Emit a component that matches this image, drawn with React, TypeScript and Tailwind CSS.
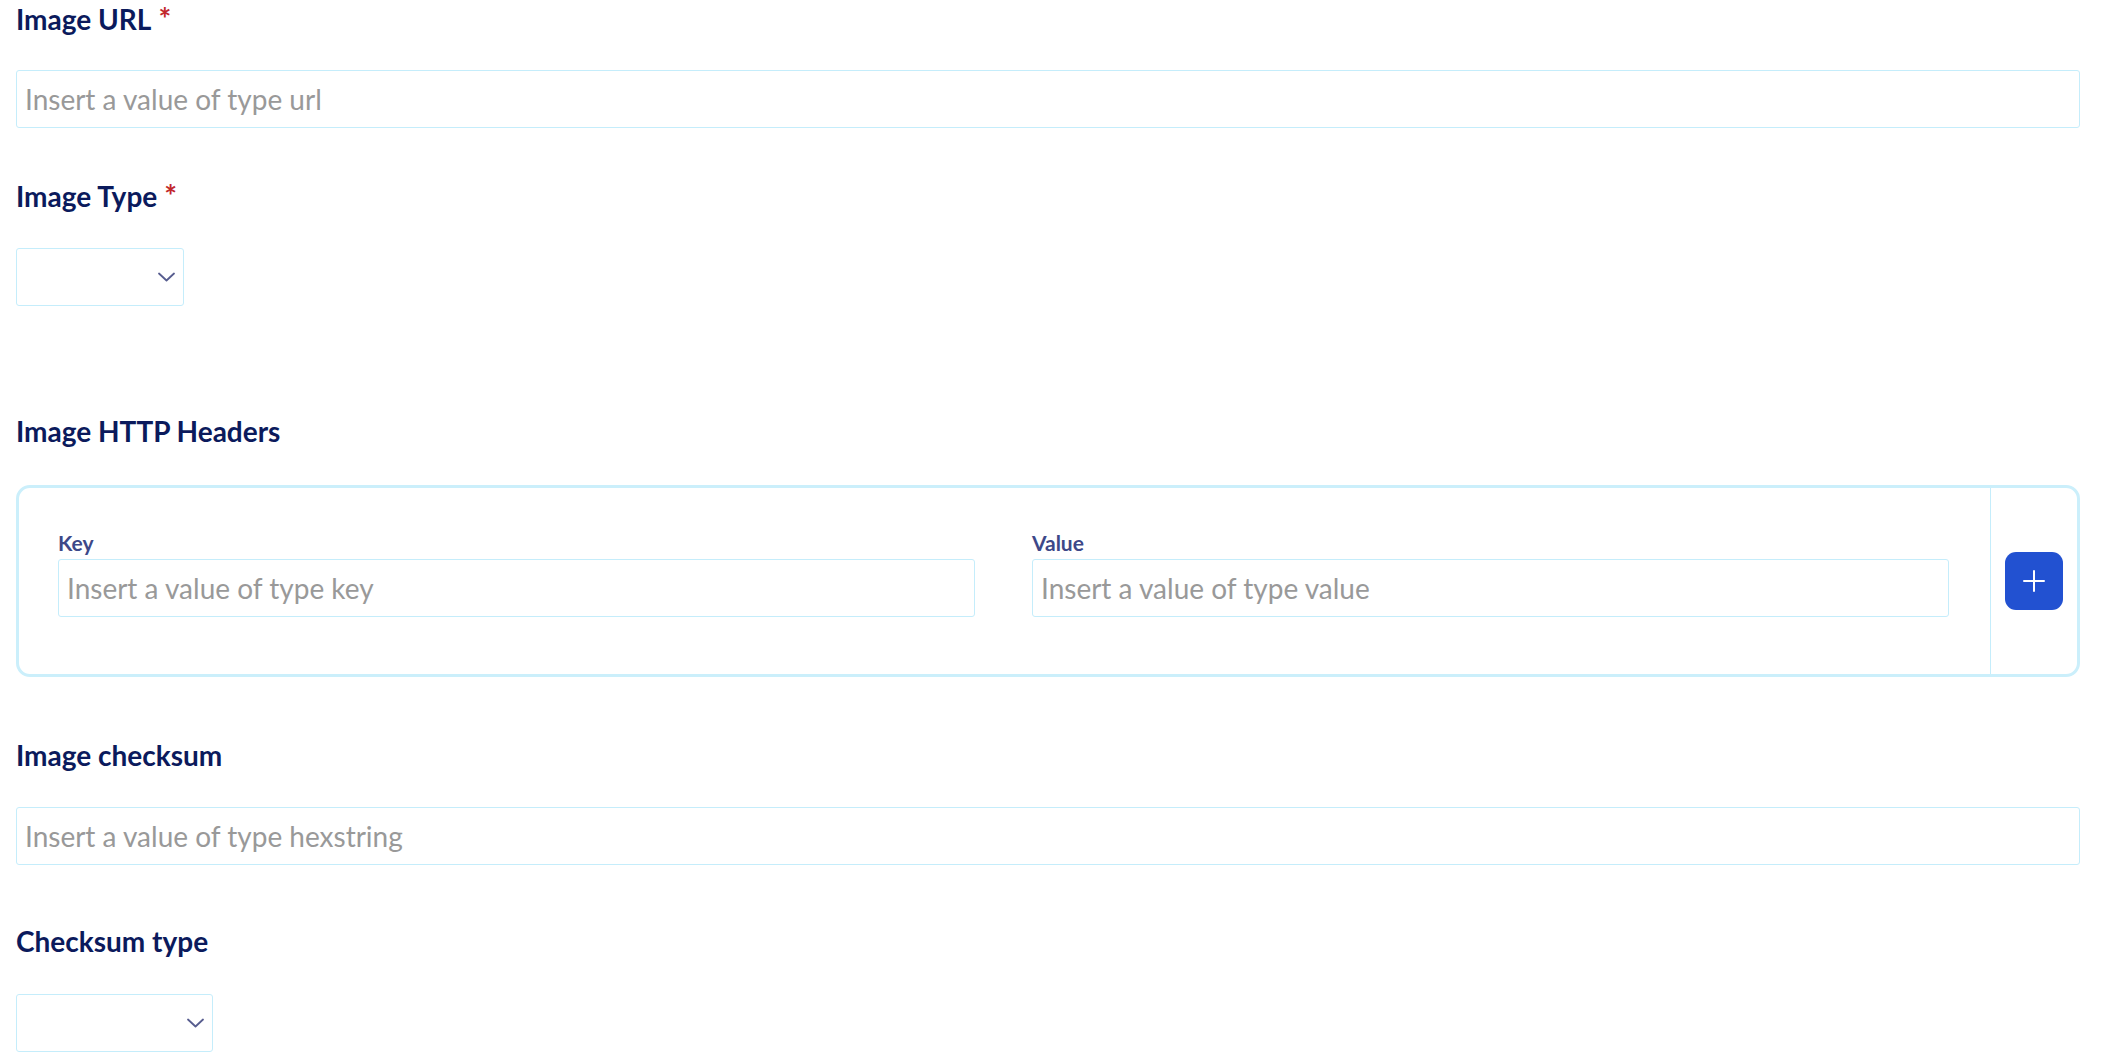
import React from "react";

const font = { fontFamily: "Lato, 'Liberation Sans', sans-serif" };

function Label({ text, required, className = "" }: { text: string; required?: boolean; className?: string }) {
  return (
    <div className={`h-[31px] text-[28px] leading-[31px] font-bold text-[#0b1a5c] ${className}`}>
      {text}
      {required && <span className="ml-[7px] text-[30px] text-[#c2282c]">*</span>}
    </div>
  );
}

function TextInput({ placeholder, className = "" }: { placeholder: string; className?: string }) {
  return (
    <input
      placeholder={placeholder}
      className={`h-[58px] rounded-[3px] border border-[#c5edfb] bg-white px-[8px] text-[28px] text-[#333] placeholder:text-[#999999] outline-none ${className}`}
      style={font}
    />
  );
}

function Chevron() {
  return (
    <svg width="17" height="10" viewBox="0 0 17 10" fill="none">
      <path d="M1 1.5l7.5 7 7.5-7" stroke="#575d8f" strokeWidth="1.8" strokeLinecap="round" strokeLinejoin="round" />
    </svg>
  );
}

function SelectBox({ width }: { width: string }) {
  return (
    <div className={`flex h-[58px] ${width} items-center justify-end rounded-[3px] border border-[#c5edfb] bg-white pr-[8px]`}>
      <Chevron />
    </div>
  );
}

export default function App() {
  return (
    <div className="min-h-[1060px] bg-white pl-[16px] pr-[25px]" style={font}>
      <div className="flex flex-col">
        <Label text="Image URL" required className="mt-[3px]" />
        <TextInput placeholder="Insert a value of type url" className="mt-[36px] w-full" />

        <Label text="Image Type" required className="mt-[52px]" />
        <div className="mt-[37px]">
          <SelectBox width="w-[168px]" />
        </div>

        <Label text="Image HTTP Headers" className="mt-[110px]" />
        <div className="mt-[38px] flex h-[192px] rounded-[14px] border-[3px] border-[#cbeffb] bg-white">
          <div className="flex flex-1 items-start gap-[57px] pl-[39px] pr-[41px] pt-[43px]">
            <div className="flex flex-1 flex-col">
              <div className="h-[24px] text-[21px] leading-[24px] font-bold text-[#3d4888]">Key</div>
              <TextInput placeholder="Insert a value of type key" className="mt-[4px] w-full" />
            </div>
            <div className="flex flex-1 flex-col">
              <div className="h-[24px] text-[21px] leading-[24px] font-bold text-[#3d4888]">Value</div>
              <TextInput placeholder="Insert a value of type value" className="mt-[4px] w-full" />
            </div>
          </div>
          <div className="flex w-[87px] items-center justify-center border-l border-[#c5edfb]">
            <button className="flex h-[58px] w-[58px] items-center justify-center rounded-[11px] bg-[#2251d1]">
              <svg width="24" height="24" viewBox="0 0 24 24" fill="none">
                <path d="M12 2v20M2 12h20" stroke="white" strokeWidth="2" strokeLinecap="round" />
              </svg>
            </button>
          </div>
        </div>

        <Label text="Image checksum" className="mt-[63px]" />
        <TextInput placeholder="Insert a value of type hexstring" className="mt-[36px] w-full" />

        <Label text="Checksum type" className="mt-[61px]" />
        <div className="mt-[37px]">
          <SelectBox width="w-[197px]" />
        </div>
      </div>
    </div>
  );
}
